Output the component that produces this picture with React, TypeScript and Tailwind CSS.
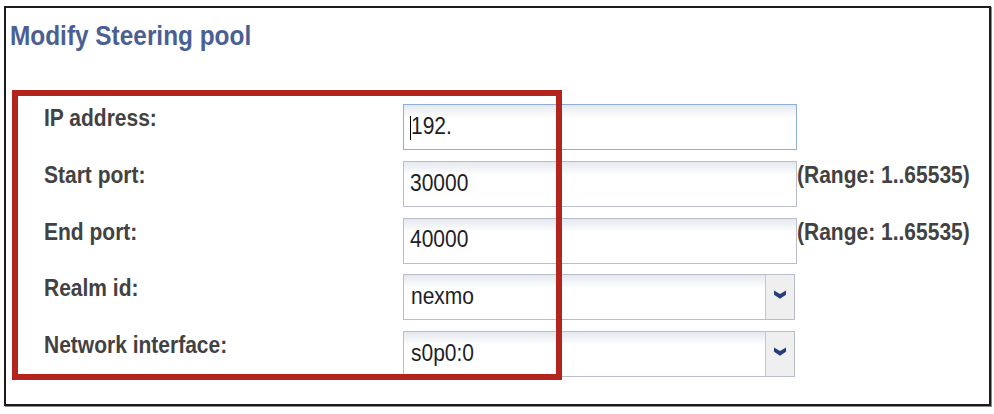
const rows = [
  { label: "IP address:", value: "192.", kind: "text", focus: true },
  { label: "Start port:", value: "30000", kind: "text", range: true },
  { label: "End port:", value: "40000", kind: "text", range: true },
  { label: "Realm id:", value: "nexmo", kind: "select" },
  { label: "Network interface:", value: "s0p0:0", kind: "select" },
];

function Chevron() {
  return (
    <svg className="shrink-0 w-[12px] h-[9px]" width="12" height="9" viewBox="0 0 12 9">
      <path d="M0 0.5 L6 4 L12 0.5 L12 4.8 L6 8.8 L0 4.8 Z" fill="#263f7c" />
    </svg>
  );
}

function Field({ row }: { row: (typeof rows)[number] }) {
  if (row.kind === "select") {
    return (
      <div className="flex w-[392px] h-[46px] border border-[#b9bdcc] bg-linear-to-b from-[#e4e8ee] to-white to-30%">
        <div className="flex-1 flex items-center pl-[7px] pb-[3px] text-[21px] text-[#1e1e28]">
          <span className="inline-block scale-y-[1.16]">{row.value}</span>
        </div>
        <div className="w-[29px] shrink-0 flex items-center justify-center border-l border-[#c3c7d3] bg-[#efefef] pb-[6px]">
          <Chevron />
        </div>
      </div>
    );
  }
  return (
    <div
      className={
        "flex items-center w-[394px] h-[46px] border bg-linear-to-b from-[#e4e8ee] to-white to-30% pl-[6px] pb-[3px] text-[21px] text-[#1e1e28] " +
        (row.focus ? "border-[#8eaed8]" : "border-[#b9bdcc]")
      }
    >
      {row.focus && <span className="w-px h-[24px] bg-black mt-[4px]" />}
      <span className="inline-block scale-y-[1.16]">{row.value}</span>
    </div>
  );
}

export default function App() {
  return (
    <div className="w-[994px] h-[414px] bg-white pt-[6px] pl-[4px] font-['Liberation_Sans',Arial,sans-serif]">
      <div className="relative w-[987px] h-[400px] border-2 border-[#1c1c1c] shadow-[1px_1px_0_#8a8a8a]">
        {/* Title */}
        <h1 className="pl-[4px] pt-[14px] text-[24.4px] leading-[28px] font-bold text-[#4b5f93]">
          <span className="inline-block scale-y-[1.15]">Modify Steering pool</span>
        </h1>

        {/* Form rows */}
        <div className="mt-[54px] flex flex-col gap-[10.75px]">
          {rows.map((row) => (
            <div key={row.label} className="flex h-[46px]">
              <div className="w-[397px] shrink-0 pl-[38px] pt-[2px] text-[21px] leading-[24px] font-bold text-[#424242]">
                <span className="inline-block scale-y-[1.16]">{row.label}</span>
              </div>
              <Field row={row} />
              {row.range && (
                <div className="pt-[2px] text-[21px] leading-[24px] font-bold text-[#424242]">
                  <span className="inline-block scale-y-[1.16]">(Range: 1..65535)</span>
                </div>
              )}
            </div>
          ))}
        </div>

        {/* Red annotation box */}
        <div className="absolute left-[6px] top-[82px] w-[550px] h-[290px] border-[6px] border-[#b3241f]" />
      </div>
    </div>
  );
}
